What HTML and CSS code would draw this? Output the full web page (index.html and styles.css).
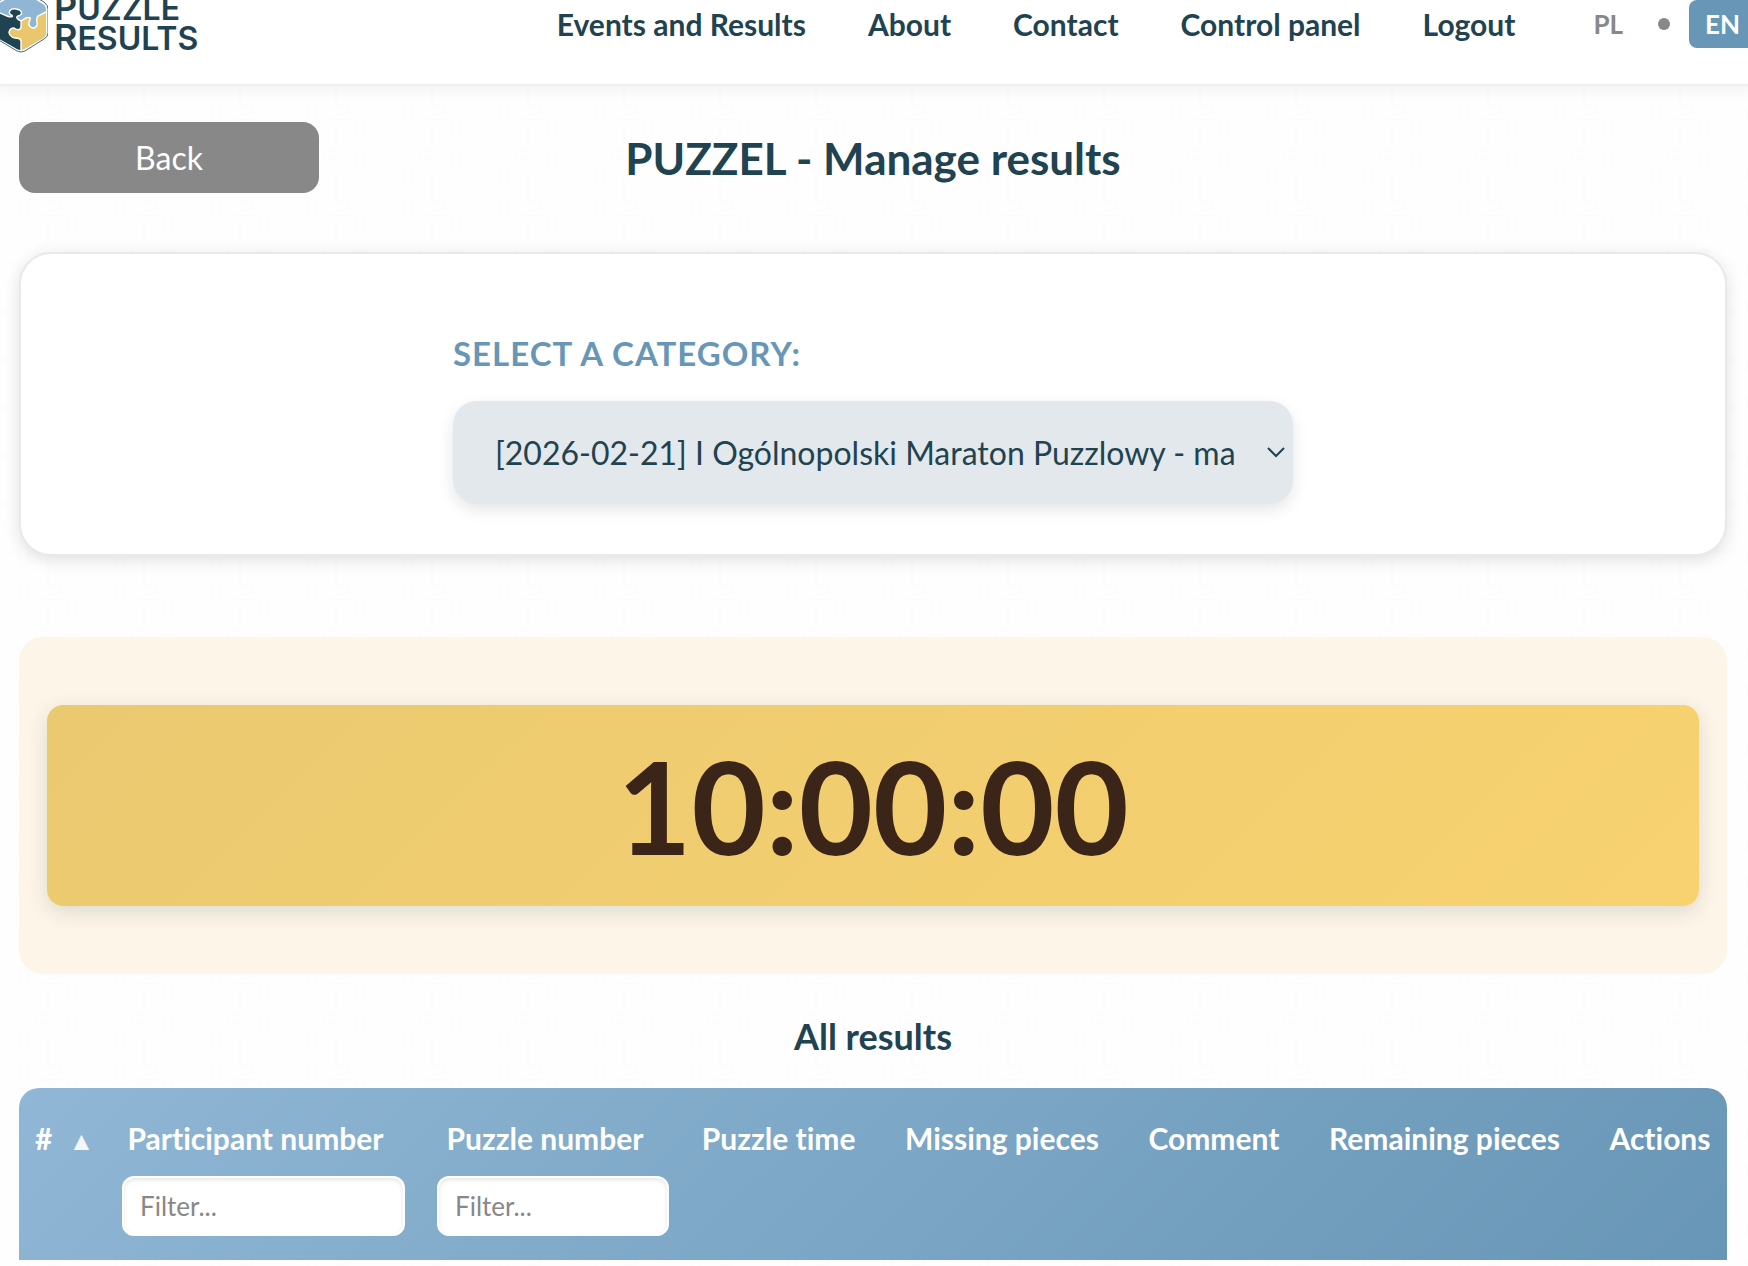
FILE: index.html
```html
<!DOCTYPE html>
<html lang="en">
<head>
<meta charset="utf-8">
<meta name="viewport" content="width=device-width, initial-scale=1">
<title>PUZZEL - Manage results</title>
<link rel="stylesheet" href="styles.css">
</head>
<body>
<header class="site-header">
  <a class="logo" href="#">
    <svg class="logo-mark" viewBox="0 0 56 64" aria-hidden="true">
      <path d="M25 2 Q28 0 32 2 L52 13 Q56 16 56 20 V44 Q56 48 52 50 L33 62 Q29 64 25 62 L5 50 Q1 48 1 44 V20 Q1 16 5 13 Z" fill="#fff" stroke="#4c6678" stroke-width="1"/>
      <path d="M25 4 Q29 2 32 4 L51 15 Q54 17 54 21 V44 Q54 47 51 49 L32 60 Q29 62 25 60 L6 49 Q3 47 3 44 V21 Q3 17 6 15 Z" fill="#8fb6d4"/>
      <path d="M3 22 L15 27 C20 29 22 27 19 26 C15 23 19 19 24 20 C31 21 31 26 26 27 C23 28 26 31 29 32 V61 Q27 61 25 60 L6 49 Q3 47 3 44 Z" fill="#1f4350"/>
      <path d="M29 32 L34 29 C39 27 39 30 37 33 C36 39 43 41 45 36 C46 33 43 30 46 27 L54 23 V44 Q54 47 51 49 L32 60 Q30 61 29 61 V52 C28 47 24 51 20 48 C15 45 17 39 22 39 C25 41 28 42 29 38 Z" fill="#eac66c"/>
      <path d="M3 22 L15 27 C20 29 22 27 19 26 C15 23 19 19 24 20 C31 21 31 26 26 27 C23 28 26 31 29 32 L34 29 C39 27 39 30 37 33 C36 39 43 41 45 36 C46 33 43 30 46 27 L54 23 M29 32 V38 C28 42 25 41 22 39 C17 39 15 45 20 48 C24 51 28 47 29 52 V61" fill="none" stroke="#fff" stroke-width="1.4"/>
    </svg>
    <span class="logo-text"><span class="logo-line"><span class="logo-cap">P</span>UZZLE</span><span class="logo-line"><span class="logo-cap">R</span>ESULTS</span></span>
  </a>
  <nav class="nav">
    <a href="#">Events and Results</a>
    <a href="#">About</a>
    <a href="#">Contact</a>
    <a href="#">Control panel</a>
    <a href="#">Logout</a>
    <div class="langs">
      <a class="lang" href="#">PL</a>
      <span class="dot"></span>
      <a class="lang lang-active" href="#">EN</a>
    </div>
  </nav>
</header>
<main class="page">
  <div class="title-row">
    <button class="back" type="button">Back</button>
    <h1 class="title">PUZZEL - Manage results</h1>
  </div>
  <section class="category-card">
    <div class="category-field">
      <label class="category-label" for="category">Select a category:</label>
      <select class="category-select" id="category">
        <option>[2026-02-21] I Ogólnopolski Maraton Puzzlowy - ma</option>
      </select>
    </div>
  </section>
  <section class="timer">
    <div class="timer-face">10:00:00</div>
  </section>
  <h2 class="subtitle">All results</h2>
  <table class="results">
    <colgroup>
      <col class="col-index">
      <col class="col-participant">
      <col class="col-puzzle">
      <col span="5">
    </colgroup>
    <thead>
      <tr>
        <th>#<span class="sort sort-up">▲</span></th>
        <th><label for="f-participant">Participant number</label><span class="sort"></span></th>
        <th><label for="f-puzzle">Puzzle number</label><span class="sort"></span></th>
        <th>Puzzle time<span class="sort"></span></th>
        <th>Missing pieces<span class="sort"></span></th>
        <th>Comment<span class="sort"></span></th>
        <th>Remaining pieces<span class="sort"></span></th>
        <th>Actions</th>
      </tr>
      <tr class="filters">
        <td></td>
        <td><input class="filter" id="f-participant" type="text" placeholder="Filter..."></td>
        <td><input class="filter" id="f-puzzle" type="text" placeholder="Filter..."></td>
        <td></td>
        <td></td>
        <td></td>
        <td></td>
        <td></td>
      </tr>
    </thead>
  </table>
</main>
</body>
</html>
```
FILE: styles.css
```css
* { box-sizing: border-box; }

body {
  margin: 0;
  overflow: hidden;
  font-family: Lato, "Liberation Sans", sans-serif;
  font-variant-ligatures: none;
  color: #1f4350;
  background: #fefefe url("data:image/svg+xml,%3Csvg xmlns='http://www.w3.org/2000/svg' width='96' height='96' fill='none' stroke='%23fcfcfc' stroke-width='2'%3E%3Cpath d='M0 24h18c6 0-4-14 6-14s0 14 6 14h36c6 0-4 14 6 14s0-14 6-14h18M0 72h18c6 0-4 14 6 14s0-14 6-14h36c6 0-4-14 6-14s0 14 6 14h18M48 0v8c0 6 12-2 12 6s-12 0-12 6v32c0 6-12-2-12 6s12 0 12 6v32'/%3E%3C/svg%3E");
}

a { color: inherit; text-decoration: none; }

/* Header bleeds past the window edges */
.site-header {
  display: flex;
  justify-content: space-between;
  align-items: flex-start;
  height: 86px;
  margin: 0 -8px;
  background: rgba(255, 255, 255, 0.8);
  border-bottom: 2px solid #efefef;
  box-shadow: 0 4px 16px rgba(0, 0, 0, 0.05);
}

.logo { display: flex; gap: 6px; margin-top: -11px; }
.logo-mark { width: 56px; height: 64px; }
.logo-text {
  display: flex;
  flex-direction: column;
  padding-top: 3px;
  font-family: Inter, sans-serif;
  font-size: 32px;
  font-weight: 600;
  line-height: 30px;
}
.logo-line { display: block; height: 30px; }
.logo-cap { font-size: 36px; }

.nav {
  display: flex;
  align-items: center;
  gap: 62px;
  height: 48px;
  font-size: 30px;
  font-weight: 700;
  white-space: nowrap;
}
.langs { display: flex; align-items: center; gap: 19px; }
.lang {
  padding: 0 16px;
  border-radius: 8px;
  font-size: 26px;
  line-height: 48px;
  color: #888;
}
.lang-active { background: #6896b6; color: #fff; }
.dot { width: 12px; height: 12px; border-radius: 50%; background: #888; }

.page { padding: 36px 21px 0 19px; }

.title-row {
  display: grid;
  grid-template-columns: 300px 1fr 300px;
  align-items: center;
}
.back {
  height: 71px;
  border: 0;
  border-radius: 16px;
  background: #888;
  color: #fff;
  font: 32px Lato, sans-serif;
}
.title { margin: 0; font-size: 44px; font-weight: 700; line-height: 52px; text-align: center; }

.category-card {
  margin-top: 59px;
  padding: 79px 32px 50px;
  border: 2px solid #e6eaeb;
  border-radius: 32px;
  background: #fff;
  box-shadow: 0 4px 16px rgba(0, 0, 0, 0.12);
}
.category-field { width: 840px; max-width: 100%; margin: 0 auto; }
.category-label {
  display: block;
  margin-bottom: 28px;
  font-size: 33px;
  font-weight: 700;
  line-height: 40px;
  letter-spacing: 1px;
  text-transform: uppercase;
  color: #6896b6;
}
.category-select {
  display: block;
  width: 100%;
  height: 103px;
  padding: 0 44px 0 42px;
  border: 0;
  border-radius: 24px;
  appearance: none;
  background: #e2e8eb url("data:image/svg+xml,%3Csvg xmlns='http://www.w3.org/2000/svg' width='18' height='12' fill='none' stroke='%231f4350' stroke-width='2'%3E%3Cpath d='M1 1l8 8 8-8'/%3E%3C/svg%3E") no-repeat right 8px center;
  box-shadow: 0 6px 16px rgba(0, 0, 0, 0.1);
  color: #1f4350;
  font: 32px Lato, sans-serif;
}

.timer {
  margin-top: 81px;
  padding: 68px 28px;
  border-radius: 24px;
  background: #fdf5e7;
}
.timer-face {
  border-radius: 16px;
  background: linear-gradient(135deg, #eac970, #f8d26f);
  box-shadow: 0 6px 20px rgba(31, 67, 80, 0.14);
  color: #3a2518;
  font-size: 128px;
  font-weight: 700;
  line-height: 201px;
  text-align: center;
}

.subtitle {
  margin: 38px 0 28px;
  font-size: 36px;
  font-weight: 700;
  line-height: 48px;
  text-align: center;
}

.results {
  width: 100%;
  border-spacing: 0;
  border-radius: 20px 20px 0 0;
  background: linear-gradient(135deg, #90b7d5, #6896b6);
  color: #fff;
}
.col-index { width: 87px; }
.col-participant { width: 315px; }
.col-puzzle { width: 264px; }
.results th {
  padding: 30px 16px 18px;
  font-size: 30px;
  font-weight: 700;
  line-height: 40px;
  text-align: center;
  white-space: nowrap;
}
.results th:first-child { text-align: left; }
.results td { padding: 0 16px 24px; }
.sort { display: inline-block; width: 16px; }
.sort-up { margin-left: 16px; font-size: 26px; line-height: 24px; opacity: 0.9; }

.filter {
  display: block;
  width: 100%;
  height: 60px;
  padding: 0 16px;
  border: 2px solid #fff;
  border-radius: 12px;
  background: #fff;
  box-shadow: inset 0 2px 4px rgba(0, 0, 0, 0.1);
  font: 26px Lato, sans-serif;
}
.filter::placeholder { color: #888; opacity: 1; }
```
